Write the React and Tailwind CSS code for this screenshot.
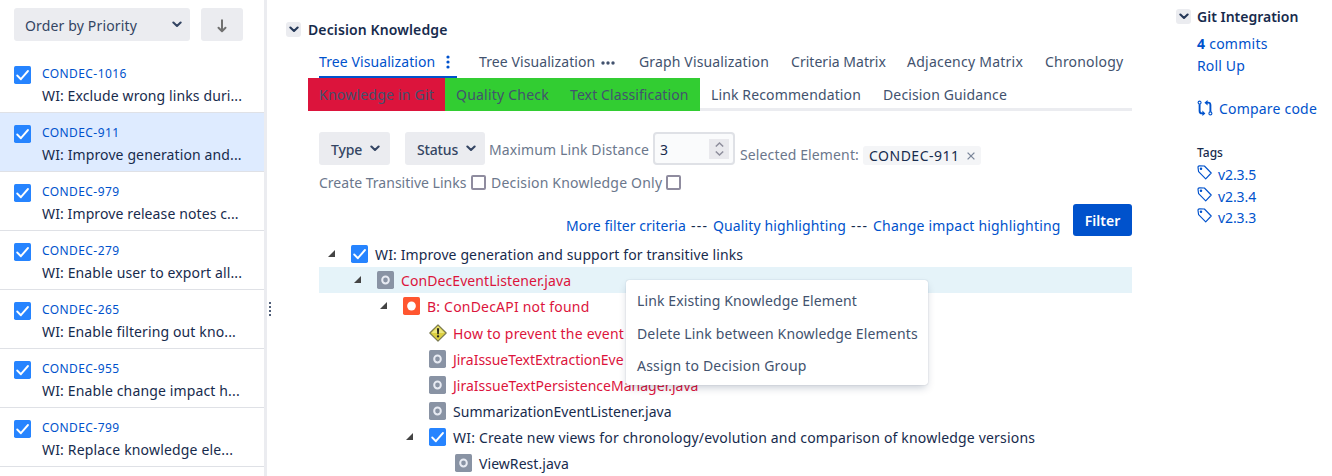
import clsx from "clsx";

const issues = [
  { key: "CONDEC-1016", title: "WI: Exclude wrong links duri...", track: "tracking-[0.11px]" },
  { key: "CONDEC-911", title: "WI: Improve generation and...", track: "tracking-[0.12px]", active: true },
  { key: "CONDEC-979", title: "WI: Improve release notes c...", track: "tracking-[0.11px]" },
  { key: "CONDEC-279", title: "WI: Enable user to export all...", track: "tracking-[0.13px]" },
  { key: "CONDEC-265", title: "WI: Enable filtering out kno...", track: "tracking-[0.12px]" },
  { key: "CONDEC-955", title: "WI: Enable change impact h...", track: "tracking-[0.14px]" },
  { key: "CONDEC-799", title: "WI: Replace knowledge ele...", track: "tracking-[0.17px]" },
];

const tree = [
  { icon: "task", text: "WI: Improve generation and support for transitive links", indent: "pl-[9px]", open: true, track: "tracking-[0.12px]" },
  { icon: "file", text: "ConDecEventListener.java", indent: "pl-[35px]", open: true, red: true, active: true, track: "tracking-[0.08px]" },
  { icon: "bug", text: "B: ConDecAPI not found", indent: "pl-[61px]", open: true, red: true, track: "tracking-[0.2px]" },
  { icon: "warn", text: "How to prevent the event", indent: "pl-[87px]", red: true, tall: true, track: "tracking-[0.21px]" },
  { icon: "file", text: "JiraIssueTextExtractionEve", indent: "pl-[87px]", red: true, track: "tracking-[-0.03px]" },
  { icon: "file", text: "JiraIssueTextPersistenceManager.java", indent: "pl-[87px]", red: true, track: "tracking-[0.01px]" },
  { icon: "file", text: "SummarizationEventListener.java", indent: "pl-[87px]", track: "tracking-[0.04px]" },
  { icon: "task", text: "WI: Create new views for chronology/evolution and comparison of knowledge versions", indent: "pl-[87px]", open: true, track: "tracking-[0.18px]" },
  { icon: "file", text: "ViewRest.java", indent: "pl-[113px]", track: "tracking-[0.06px]" },
];

function Chevron({ className }) {
  return (
    <svg viewBox="0 0 10 7" className={clsx("h-[7px] w-[10px] shrink-0", className)} fill="none" stroke="currentColor" strokeWidth="2.1" strokeLinecap="round" strokeLinejoin="round">
      <path d="M1.4 1.5 5 4.9 8.6 1.5" />
    </svg>
  );
}

function TypeIcon({ kind }) {
  if (kind === "warn") {
    return (
      <svg viewBox="0 0 18 18" className="h-[18px] w-[18px] shrink-0">
        <path d="M9 .8 17.2 9 9 17.2.8 9Z" fill="#dcd042" stroke="#77774f" strokeWidth="1.1" strokeLinejoin="round" />
        <path d="M9 2.6 15.4 9H2.6Z" fill="#ece77e" />
        <path d="M7.9 4.3h2.3l-.4 6H8.3Z" fill="#26261c" />
        <rect x="7.9" y="11.2" width="2.3" height="2.2" rx=".8" fill="#26261c" />
      </svg>
    );
  }
  return (
    <svg viewBox="0 0 18 18" preserveAspectRatio="none" className="h-[18px] w-[17px] shrink-0">
      <rect width="18" height="18" rx="1.8" fill={kind === "task" ? "#2684ff" : kind === "bug" ? "#ff5630" : "#8993a4"} />
      {kind === "task" && <path d="M3.4 9.5 7.3 13.2 14.8 5" fill="none" stroke="#fff" strokeWidth="2" strokeLinecap="round" strokeLinejoin="round" />}
      {kind === "bug" && <circle cx="9" cy="9" r="4.6" fill="#fff" />}
      {kind === "file" && <circle cx="9" cy="9" r="3.5" fill="none" stroke="#e8ebf3" strokeWidth="2.1" />}
    </svg>
  );
}

function Toggle() {
  return (
    <span className="flex h-[15px] w-[15px] shrink-0 items-center justify-center rounded-[3px] bg-[#ebecf0] text-[#253858]">
      <Chevron />
    </span>
  );
}

function Tag() {
  return (
    <svg viewBox="0 0 15 15" className="h-[15px] w-[15px] shrink-0" fill="none" stroke="#0052cc" strokeWidth="1.15" strokeLinejoin="round">
      <path d="M1 2.4Q1 .9 2.5.9L7.4 1 14.2 8 8.7 13.8 1.6 6.7Z" />
      <circle cx="4" cy="3.8" r=".7" fill="#0052cc" />
    </svg>
  );
}

function Checkbox() {
  return <span className="h-[15px] w-[15px] shrink-0 rounded-[2px] border-2 border-[#8f8c9f] bg-white" />;
}

function Sidebar() {
  return (
    <aside className="flex h-full w-[267px] shrink-0 flex-col border-r-[3px] border-[#ebecf0]">
      <div className="flex h-[54px] shrink-0 gap-[11px] pt-2 pl-[14px]">
        <button className="flex h-[33px] w-[176px] items-center justify-between rounded-[3px] bg-[#ebecf0] pr-2 pl-[11px] tracking-[0.15px] text-[#344563]">
          <span className="pt-[2px]">Order by Priority</span>
          <Chevron className="text-[#344563]" />
        </button>
        <button className="flex h-[33px] w-[42px] items-center justify-center rounded-[3px] bg-[#ebecf0]">
          <svg viewBox="0 0 10 14" className="mt-[2px] h-[14px] w-[10px]" fill="none" stroke="#707070" strokeWidth="2" strokeLinecap="round" strokeLinejoin="round">
            <path d="M5 1.2V12M1.5 8.8 5 12.2 8.5 8.8" />
          </svg>
        </button>
      </div>
      {issues.map((it) => (
        <div key={it.key} className={clsx("flex h-[59px] shrink-0 gap-[11px] border-b border-[#dfe1e6] pt-3 pl-[14px]", it.active && "bg-[#deebff]")}>
          <TypeIcon kind="task" />
          <div className="flex flex-col whitespace-nowrap">
            <span className="-mt-[2px] h-[22px] text-[12px] leading-[20px] tracking-[0.42px] text-[#0052cc]">{it.key}</span>
            <span className={clsx("leading-[20px]", it.track)}>{it.title}</span>
          </div>
        </div>
      ))}
    </aside>
  );
}

function Tabs() {
  return (
    <div className="text-[#42526e]">
      <div className="flex h-8 whitespace-nowrap pl-[11px]">
        <span className="flex w-[138px] items-center border-b-2 border-[#0052cc] pt-[2px] text-[#0052cc]">
          <span className="w-[127px] tracking-[0.09px]">Tree Visualization</span>
          <svg viewBox="0 0 4 14" className="h-[14px] w-1" fill="currentColor"><circle cx="2" cy="2" r="1.6" /><circle cx="2" cy="7" r="1.6" /><circle cx="2" cy="12" r="1.6" /></svg>
        </span>
        <span className="ml-[22px] flex w-[160px] items-center">
          <span className="w-[122px] tracking-[0.09px]">Tree Visualization</span>
          <svg viewBox="0 0 14 4" className="mt-[2px] h-1 w-[14px]" fill="currentColor"><circle cx="2" cy="2" r="1.7" /><circle cx="7" cy="2" r="1.7" /><circle cx="12" cy="2" r="1.7" /></svg>
        </span>
        <span className="w-[152px] leading-8 tracking-[0.15px]">Graph Visualization</span>
        <span className="w-[116px] leading-8 tracking-[0.03px]">Criteria Matrix</span>
        <span className="w-[138px] leading-8 tracking-[0.24px]">Adjacency Matrix</span>
        <span className="leading-8 tracking-[0.2px]">Chronology</span>
      </div>
      <div className="flex h-[33px] whitespace-nowrap leading-[34px]">
        <span className="w-[137px] bg-[#dc143c] pl-[11px] tracking-[0.22px]">Knowledge in Git</span>
        <span className="w-[114px] bg-[#32cd32] pl-[11px] tracking-[0.22px]">Quality Check</span>
        <span className="w-[141px] bg-[#32cd32] pl-[11px] tracking-[0.1px]">Text Classification</span>
        <span className="flex grow border-b-[3px] border-[#ebecf0] pl-[11px]">
          <span className="w-[172px] tracking-[0.13px]">Link Recommendation</span>
          <span className="tracking-[0.13px]">Decision Guidance</span>
        </span>
      </div>
    </div>
  );
}

function Filters() {
  return (
    <div className="pl-[11px] whitespace-nowrap text-[#6b778c]">
      <div className="flex h-[33px] items-center">
        <button className="flex h-[33px] w-[71px] items-center rounded-[3px] bg-[#ebecf0] pl-3 font-medium text-[#344563]">
          <span className="w-[39px] pt-[2px] text-left tracking-[-0.15px]">Type</span><Chevron />
        </button>
        <button className="ml-[15px] flex h-[33px] w-[80px] items-center rounded-[3px] bg-[#ebecf0] pl-3 font-medium text-[#344563]">
          <span className="w-[49px] pt-[2px] text-left tracking-[-0.15px]">Status</span><Chevron />
        </button>
        <span className="ml-[4px] w-[164px] pt-[2px] tracking-[0.12px]">Maximum Link Distance</span>
        <span className="flex h-[33px] w-[82px] items-center justify-between rounded-[4px] border-2 border-[#dfe1e6] bg-[#fafbfc] pr-1 pl-[5px] text-[#172b4d]">
          <span className="pt-[2px]">3</span>
          <span className="flex h-5 w-5 flex-col items-center justify-center gap-1 bg-[#e9e9ed] text-[#8f8f9d]">
            <svg viewBox="0 0 9 5" className="h-[5px] w-[9px]" fill="none" stroke="currentColor" strokeWidth="1.5"><path d="M.8 4.5 4.5 1 8.2 4.5" /></svg>
            <svg viewBox="0 0 9 5" className="h-[5px] w-[9px]" fill="none" stroke="currentColor" strokeWidth="1.5"><path d="M.8.5 4.5 4 8.2.5" /></svg>
          </span>
        </span>
        <span className="ml-[5px] w-[123px] self-end leading-5 tracking-[0.13px]">Selected Element:</span>
        <span className="flex h-[19px] w-[118px] items-center self-end rounded-[3px] bg-[#f4f5f7] pl-[6px] text-[#172b4d]">
          <span className="w-[98px] tracking-[0.5px]">CONDEC-911</span>
          <svg viewBox="0 0 8 8" className="h-2 w-2" stroke="#7a869a" strokeWidth="1.3"><path d="M.6.6 7.4 7.4M7.4.6.6 7.4" /></svg>
        </span>
      </div>
      <div className="mt-[9px] flex h-[17px] items-center">
        <span className="w-[152px] tracking-[0.01px]">Create Transitive Links</span>
        <Checkbox />
        <span className="ml-[5px] w-[175px] tracking-[0.2px]">Decision Knowledge Only</span>
        <Checkbox />
      </div>
      <div className="mt-[13px] flex h-[32px] justify-end text-[#0052cc]">
        <span className="flex w-[507px] pt-[12px] leading-5">
          <span className="w-[125px] tracking-[0.05px]">More filter criteria</span>
          <span className="w-[22px] tracking-[1.3px] text-[#172b4d]">---</span>
          <span className="w-[138px] tracking-[0.13px]">Quality highlighting</span>
          <span className="w-[22px] tracking-[1.3px] text-[#172b4d]">---</span>
          <span className="tracking-[0.19px]">Change impact highlighting</span>
        </span>
        <button className="h-8 w-[59px] rounded-[3px] bg-[#0052cc] pt-[1px] font-semibold text-white">Filter</button>
      </div>
    </div>
  );
}

function Tree() {
  return (
    <div className="mt-[5px] ml-[11px] flex flex-col">
      {tree.map((n) => (
        <div key={n.text} className={clsx("flex shrink-0 items-center whitespace-nowrap", n.tall ? "h-[27px]" : "h-[26px]", n.indent, n.active && "bg-[#e5f3f9]")}>
          <span className="flex w-[23px] shrink-0">
            {n.open && <svg viewBox="0 0 7 7" className="-mt-[2px] h-[7px] w-[7px]"><path d="M7 0V7H0Z" fill="#444" /></svg>}
          </span>
          <span className="w-6 shrink-0"><TypeIcon kind={n.icon} /></span>
          <span className={clsx("pt-[2px]", n.track, n.red && "text-[#dc143c]")}>{n.text}</span>
        </div>
      ))}
    </div>
  );
}

function ContextMenu() {
  return (
    <div className="absolute top-[280px] left-[626px] flex h-[105px] w-[302px] flex-col rounded-[3px] bg-white pt-[4px] pl-[11px] whitespace-nowrap text-[#42526e] shadow-[0_4px_8px_-2px_rgba(9,30,66,0.25),0_0_1px_rgba(9,30,66,0.31)]">
      <span className="h-[33px] leading-[33px] tracking-[0.11px]">Link Existing Knowledge Element</span>
      <span className="h-[32px] leading-[33px] tracking-[0.15px]">Delete Link between Knowledge Elements</span>
      <span className="h-[33px] leading-[33px] tracking-[0.19px]">Assign to Decision Group</span>
    </div>
  );
}

function GitPanel() {
  return (
    <aside className="flex grow flex-col pt-[6px] pl-[44px] whitespace-nowrap text-[#0052cc]">
      <div className="flex h-5 items-center gap-[6px]">
        <Toggle />
        <span className="pt-[2px] font-semibold text-[#172b4d]">Git Integration</span>
      </div>
      <div className="flex flex-col pl-[21px]">
        <span className="mt-[7px] h-[22px] leading-[22px] tracking-[0.25px]"><b>4</b> commits</span>
        <span className="h-[22px] leading-[22px] tracking-[0.16px]">Roll Up</span>
        <span className="mt-[21px] flex h-[22px] items-center gap-[6px] tracking-[0.2px]">
          <svg viewBox="0 0 16 16" className="-mt-[2px] h-4 w-4" fill="none" stroke="#0052cc">
            <circle cx="2.6" cy="2.6" r="1.5" strokeWidth="1.1" />
            <circle cx="13.4" cy="13.4" r="1.5" strokeWidth="1.1" />
            <path d="M2.6 4.2V11Q2.6 13.4 5 13.4H6M13.4 11.8V5Q13.4 2.6 11 2.6H9.5" strokeWidth="1.9" />
            <path d="M5.4 10.6 8.4 13.4 5.4 16ZM10.6 0 7.4 2.7 10.6 5.4Z" fill="#0052cc" stroke="none" />
          </svg>
          Compare code
        </span>
        <span className="mt-[23px] h-5 text-[12px] leading-5 font-medium text-[#172b4d]">Tags</span>
        {["v2.3.5", "v2.3.4", "v2.3.3"].map((v) => (
          <span key={v} className="flex h-[21.5px] items-center gap-[6px] tracking-[-0.1px]">
            <span className="-mt-[2px]"><Tag /></span><span className="pt-[3px]">{v}</span>
          </span>
        ))}
      </div>
    </aside>
  );
}

export default function App() {
  return (
    <div className="relative flex h-[476px] w-[1332px] overflow-hidden bg-white font-['Noto_Sans',sans-serif] text-[14px] leading-5 text-[#172b4d]">
      <Sidebar />
      <div className="flex w-[19px] shrink-0 flex-col items-start gap-[2px] pt-[302px] pl-[2px]">
        {[0, 1, 2, 3].map((i) => <span key={i} className="h-[2px] w-[2px] bg-[#505f79]" />)}
      </div>
      <main className="flex w-[846px] shrink-0 flex-col pt-[19px]">
        <div className="flex h-5 items-center gap-[7px]">
          <Toggle />
          <span className="pt-[2px] font-semibold tracking-[0.12px]">Decision Knowledge</span>
        </div>
        <div className="mt-[7px] pl-[22px]">
          <Tabs />
          <div className="mt-[21px]"><Filters /></div>
          <Tree />
        </div>
      </main>
      <GitPanel />
      <ContextMenu />
    </div>
  );
}
